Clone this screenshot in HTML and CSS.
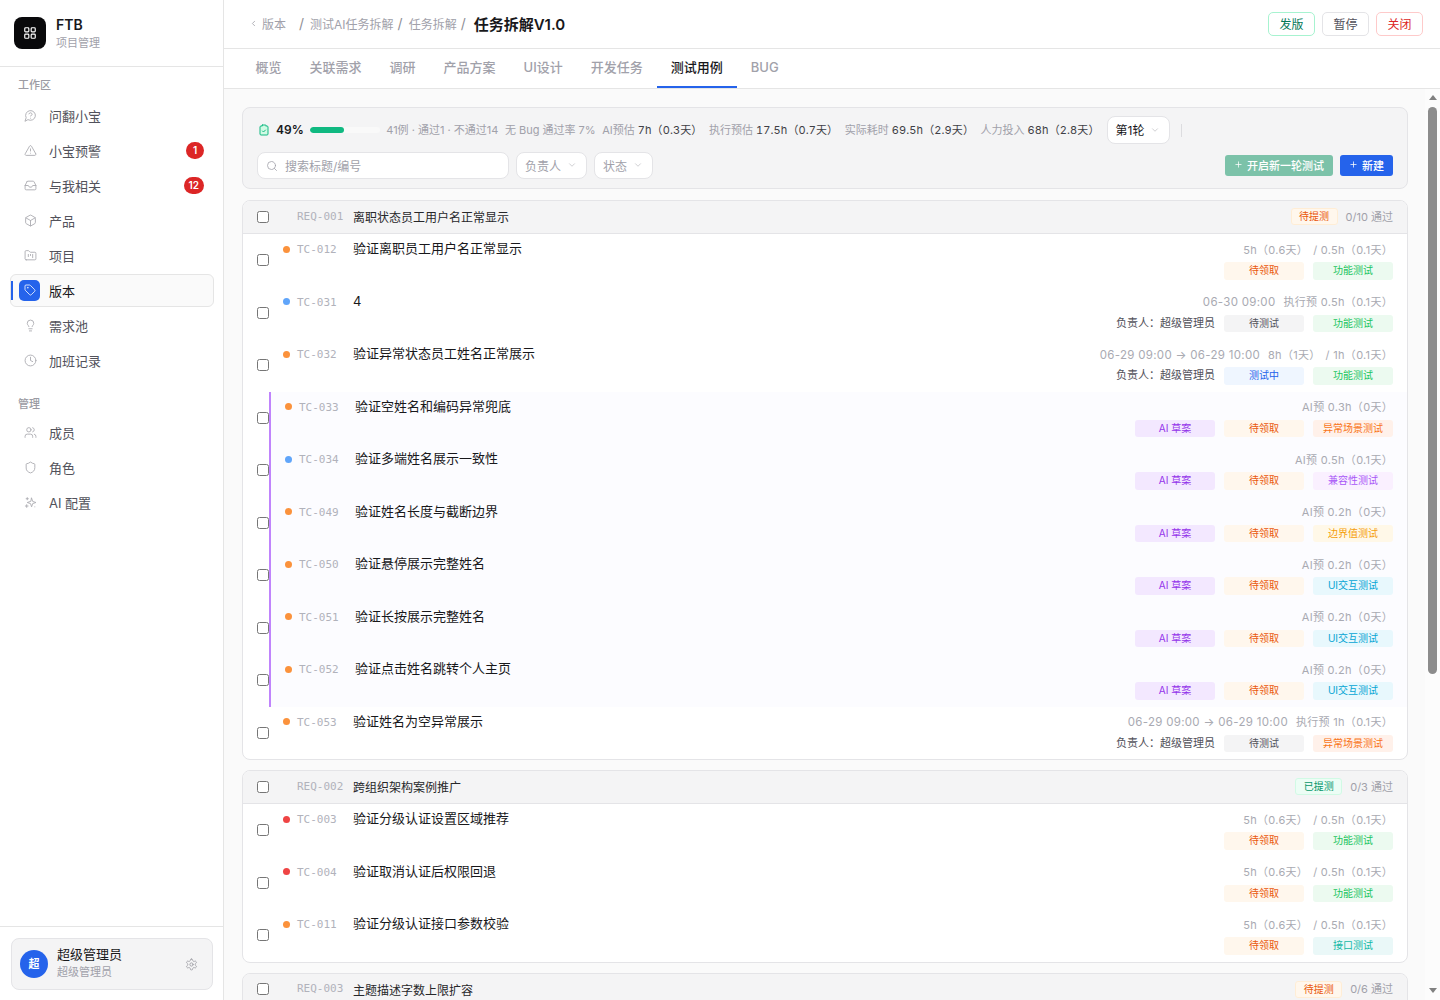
FILE: index.html
```html
<!DOCTYPE html>
<html lang="zh-CN">
  <head>
    <meta charset="UTF-8" />
    <meta name="viewport" content="width=device-width, initial-scale=1.0" />
    <title>任务拆解V1.0</title>
    <link rel="stylesheet" href="styles.css">
  </head>
  <body>
    <svg class="sprite" xmlns="http://www.w3.org/2000/svg">
      <symbol id="i-ask" viewBox="0 0 24 24"><path d="M7.9 20A9 9 0 1 0 4 16.1L2 22Z"/><path d="M9.09 9a3 3 0 0 1 5.83 1c0 2-3 3-3 3"/><path d="M12 17h.01"/></symbol>
      <symbol id="i-alert" viewBox="0 0 24 24"><path d="m21.73 18-8-14a2 2 0 0 0-3.48 0l-8 14A2 2 0 0 0 4 21h16a2 2 0 0 0 1.73-3"/><path d="M12 9v4"/><path d="M12 17h.01"/></symbol>
      <symbol id="i-inbox" viewBox="0 0 24 24"><polyline points="22 12 16 12 14 15 10 15 8 12 2 12"/><path d="M5.45 5.11 2 12v6a2 2 0 0 0 2 2h16a2 2 0 0 0 2-2v-6l-3.45-6.89A2 2 0 0 0 16.76 4H7.24a2 2 0 0 0-1.79 1.11z"/></symbol>
      <symbol id="i-package" viewBox="0 0 24 24"><path d="M21 8a2 2 0 0 0-1-1.73l-7-4a2 2 0 0 0-2 0l-7 4A2 2 0 0 0 3 8v8a2 2 0 0 0 1 1.73l7 4a2 2 0 0 0 2 0l7-4A2 2 0 0 0 21 16Z"/><path d="m3.3 7 8.7 5 8.7-5"/><path d="M12 22V12"/></symbol>
      <symbol id="i-folder" viewBox="0 0 24 24"><path d="M4 20h16a2 2 0 0 0 2-2V8a2 2 0 0 0-2-2h-7.93a2 2 0 0 1-1.66-.9l-.82-1.2A2 2 0 0 0 7.93 3H4a2 2 0 0 0-2 2v13c0 1.1.9 2 2 2Z"/><path d="M8 10v4"/><path d="M12 10v2"/><path d="M16 10v6"/></symbol>
      <symbol id="i-tag" viewBox="0 0 24 24"><path d="M12.586 2.586A2 2 0 0 0 11.172 2H4a2 2 0 0 0-2 2v7.172a2 2 0 0 0 .586 1.414l8.704 8.704a2.426 2.426 0 0 0 3.42 0l6.58-6.58a2.426 2.426 0 0 0 0-3.42z"/><circle cx="7.5" cy="7.5" r=".5"/></symbol>
      <symbol id="i-bulb" viewBox="0 0 24 24"><path d="M15 14c.2-1 .7-1.7 1.5-2.5 1-.9 1.5-2.2 1.5-3.5A6 6 0 0 0 6 8c0 1 .2 2.2 1.5 3.5.7.7 1.3 1.5 1.5 2.5"/><path d="M9 18h6"/><path d="M10 22h4"/></symbol>
      <symbol id="i-clock" viewBox="0 0 24 24"><circle cx="12" cy="12" r="10"/><polyline points="12 6 12 12 16 14"/></symbol>
      <symbol id="i-users" viewBox="0 0 24 24"><path d="M16 21v-2a4 4 0 0 0-4-4H6a4 4 0 0 0-4 4v2"/><circle cx="9" cy="7" r="4"/><path d="M22 21v-2a4 4 0 0 0-3-3.87"/><path d="M16 3.13a4 4 0 0 1 0 7.75"/></symbol>
      <symbol id="i-shield" viewBox="0 0 24 24"><path d="M20 13c0 5-3.5 7.5-7.66 8.95a1 1 0 0 1-.67-.01C7.5 20.5 4 18 4 13V6a1 1 0 0 1 1-1c2 0 4.5-1.2 6.24-2.72a1.17 1.17 0 0 1 1.52 0C14.51 3.81 17 5 19 5a1 1 0 0 1 1 1z"/></symbol>
      <symbol id="i-spark" viewBox="0 0 24 24"><path d="M14 4 16 10 22 12 16 14 14 20 12 14 6 12 12 10Z"/><path d="M6 3v4"/><path d="M4 5h4"/><path d="M5 16v5"/><path d="M2.5 18.5h5"/><path d="M20 20h.01"/></symbol>
      <symbol id="i-gear" viewBox="0 0 24 24"><path d="M12.22 2h-.44a2 2 0 0 0-2 2v.18a2 2 0 0 1-1 1.73l-.43.25a2 2 0 0 1-2 0l-.15-.08a2 2 0 0 0-2.73.73l-.22.38a2 2 0 0 0 .73 2.73l.15.1a2 2 0 0 1 1 1.72v.51a2 2 0 0 1-1 1.74l-.15.09a2 2 0 0 0-.73 2.73l.22.38a2 2 0 0 0 2.73.73l.15-.08a2 2 0 0 1 2 0l.43.25a2 2 0 0 1 1 1.73V20a2 2 0 0 0 2 2h.44a2 2 0 0 0 2-2v-.18a2 2 0 0 1 1-1.73l.43-.25a2 2 0 0 1 2 0l.15.08a2 2 0 0 0 2.73-.73l.22-.39a2 2 0 0 0-.73-2.73l-.15-.08a2 2 0 0 1-1-1.74v-.5a2 2 0 0 1 1-1.74l.15-.09a2 2 0 0 0 .73-2.73l-.22-.38a2 2 0 0 0-2.73-.73l-.15.08a2 2 0 0 1-2 0l-.43-.25a2 2 0 0 1-1-1.73V4a2 2 0 0 0-2-2z"/><circle cx="12" cy="12" r="3"/></symbol>
      <symbol id="i-grid" viewBox="0 0 24 24"><rect x="3" y="3" width="7" height="7" rx="1.5"/><rect x="14" y="3" width="7" height="7" rx="1.5"/><rect x="3" y="14" width="7" height="7" rx="1.5"/><rect x="14" y="14" width="7" height="7" rx="1.5"/></symbol>
      <symbol id="i-clip" viewBox="0 0 24 24"><rect x="8" y="2" width="8" height="4" rx="1"/><path d="M16 4h2a2 2 0 0 1 2 2v14a2 2 0 0 1-2 2H6a2 2 0 0 1-2-2V6a2 2 0 0 1 2-2h2"/><path d="m9 14 2 2 4-4"/></symbol>
      <symbol id="i-search" viewBox="0 0 24 24"><circle cx="11" cy="11" r="8"/><path d="m21 21-4.3-4.3"/></symbol>
      <symbol id="i-down" viewBox="0 0 24 24"><path d="m6 9 6 6 6-6"/></symbol>
      <symbol id="i-left" viewBox="0 0 24 24"><path d="m15 18-6-6 6-6"/></symbol>
      <symbol id="i-plus" viewBox="0 0 24 24"><path d="M5 12h14"/><path d="M12 5v14"/></symbol>
    </svg>

    <div class="app">
      <aside class="sidebar">
        <div class="brand">
          <div class="brand-logo"><svg class="icon"><use href="#i-grid"/></svg></div>
          <div class="brand-text">
            <div class="brand-name">FTB</div>
            <div class="brand-sub">项目管理</div>
          </div>
        </div>

        <nav class="nav">
          <div class="nav-label">工作区</div>
          <a class="nav-item"><svg class="icon"><use href="#i-ask"/></svg>问翻小宝</a>
          <a class="nav-item"><svg class="icon"><use href="#i-alert"/></svg>小宝预警<span class="nav-badge">1</span></a>
          <a class="nav-item"><svg class="icon"><use href="#i-inbox"/></svg>与我相关<span class="nav-badge">12</span></a>
          <a class="nav-item"><svg class="icon"><use href="#i-package"/></svg>产品</a>
          <a class="nav-item"><svg class="icon"><use href="#i-folder"/></svg>项目</a>
          <a class="nav-item active"><span class="nav-active-icon"><svg class="icon"><use href="#i-tag"/></svg></span>版本</a>
          <a class="nav-item"><svg class="icon"><use href="#i-bulb"/></svg>需求池</a>
          <a class="nav-item"><svg class="icon"><use href="#i-clock"/></svg>加班记录</a>

          <div class="nav-label nav-label-second">管理</div>
          <a class="nav-item"><svg class="icon"><use href="#i-users"/></svg>成员</a>
          <a class="nav-item"><svg class="icon"><use href="#i-shield"/></svg>角色</a>
          <a class="nav-item"><svg class="icon"><use href="#i-spark"/></svg>AI 配置</a>
        </nav>

        <div class="user-wrap">
          <div class="user-card">
            <div class="avatar">超</div>
            <div class="user-text">
              <div class="user-name">超级管理员</div>
              <div class="user-role">超级管理员</div>
            </div>
            <svg class="icon user-gear"><use href="#i-gear"/></svg>
          </div>
        </div>
      </aside>

      <div class="page">
        <header class="topbar">
          <div class="crumbs">
            <svg class="icon crumb-back"><use href="#i-left"/></svg>
            <span class="crumb crumb-first">版本</span>
            <span class="crumb-sep">/</span>
            <span class="crumb">测试AI任务拆解</span>
            <span class="crumb-sep">/</span>
            <span class="crumb">任务拆解</span>
            <span class="crumb-sep">/</span>
            <span class="crumb-now">任务拆解V1.0</span>
          </div>
          <div class="top-actions">
            <button class="top-btn green">发版</button>
            <button class="top-btn">暂停</button>
            <button class="top-btn red">关闭</button>
          </div>
        </header>

        <div class="tabs">
          <a class="tab">概览</a>
          <a class="tab">关联需求</a>
          <a class="tab">调研</a>
          <a class="tab">产品方案</a>
          <a class="tab">UI设计</a>
          <a class="tab">开发任务</a>
          <a class="tab active">测试用例</a>
          <a class="tab">BUG</a>
        </div>

        <div class="page-body">
          <main class="main">
            <section class="toolbar">
              <div class="stats">
                <svg class="icon stats-icon"><use href="#i-clip"/></svg>
                <span class="stats-pct">49%</span>
                <span class="bar"><span class="bar-fill" style="width: 49%"></span></span>
                <span class="stat">41例 · 通过1 · 不通过14</span>
                <span class="stat">无 Bug 通过率 7%</span>
                <span class="stat">AI预估 <b>7h（0.3天）</b></span>
                <span class="stat">执行预估 <b>17.5h（0.7天）</b></span>
                <span class="stat">实际耗时 <b>69.5h（2.9天）</b></span>
                <span class="stat">人力投入 <b>68h（2.8天）</b></span>
                <span class="select round">第1轮<svg class="icon"><use href="#i-down"/></svg></span>
                <span class="divider"></span>
              </div>
              <div class="filters">
                <div class="search"><svg class="icon"><use href="#i-search"/></svg>搜索标题/编号</div>
                <span class="select">负责人<svg class="icon"><use href="#i-down"/></svg></span>
                <span class="select">状态<svg class="icon"><use href="#i-down"/></svg></span>
                <div class="filter-actions">
                  <button class="act-btn act-green"><svg class="icon"><use href="#i-plus"/></svg>开启新一轮测试</button>
                  <button class="act-btn act-blue"><svg class="icon"><use href="#i-plus"/></svg>新建</button>
                </div>
              </div>
            </section>

            <section class="group">
              <div class="group-head">
                <input type="checkbox" />
                <span class="code req">REQ-001</span>
                <span class="group-title">离职状态员工用户名正常显示</span>
                <span class="state orange">待提测</span>
                <span class="pass">0/10 通过</span>
              </div>
              <div class="case">
                <input type="checkbox" />
                <div class="case-body">
                  <span class="dot orange-dot"></span><span class="code">TC-012</span><span class="case-title">验证离职员工用户名正常显示</span>
                  <div class="case-right">
                    <div class="meta"><span>5h（0.6天）</span><span class="after-paren">/ 0.5h（0.1天）</span></div>
                    <div class="tags"><span class="tag t-claim">待领取</span><span class="tag t-func">功能测试</span></div>
                  </div>
                </div>
              </div>
              <div class="case">
                <input type="checkbox" />
                <div class="case-body">
                  <span class="dot blue-dot"></span><span class="code">TC-031</span><span class="case-title">4</span>
                  <div class="case-right">
                    <div class="meta"><span class="date">06-30 09:00</span><span>执行预 0.5h（0.1天）</span></div>
                    <div class="tags"><span class="owner">负责人：超级管理员</span><span class="tag t-wait">待测试</span><span class="tag t-func">功能测试</span></div>
                  </div>
                </div>
              </div>
              <div class="case">
                <input type="checkbox" />
                <div class="case-body">
                  <span class="dot orange-dot"></span><span class="code">TC-032</span><span class="case-title">验证异常状态员工姓名正常展示</span>
                  <div class="case-right">
                    <div class="meta"><span class="date">06-29 09:00 → 06-29 10:00</span><span>8h（1天）</span><span class="after-paren">/ 1h（0.1天）</span></div>
                    <div class="tags"><span class="owner">负责人：超级管理员</span><span class="tag t-doing">测试中</span><span class="tag t-func">功能测试</span></div>
                  </div>
                </div>
              </div>
              <div class="case ai">
                <input type="checkbox" />
                <div class="case-body">
                  <span class="dot orange-dot"></span><span class="code">TC-033</span><span class="case-title">验证空姓名和编码异常兜底</span>
                  <div class="case-right">
                    <div class="meta"><span>AI预 0.3h（0天）</span></div>
                    <div class="tags"><span class="tag t-ai">AI 草案</span><span class="tag t-claim">待领取</span><span class="tag t-error">异常场景测试</span></div>
                  </div>
                </div>
              </div>
              <div class="case ai">
                <input type="checkbox" />
                <div class="case-body">
                  <span class="dot blue-dot"></span><span class="code">TC-034</span><span class="case-title">验证多端姓名展示一致性</span>
                  <div class="case-right">
                    <div class="meta"><span>AI预 0.5h（0.1天）</span></div>
                    <div class="tags"><span class="tag t-ai">AI 草案</span><span class="tag t-claim">待领取</span><span class="tag t-compat">兼容性测试</span></div>
                  </div>
                </div>
              </div>
              <div class="case ai">
                <input type="checkbox" />
                <div class="case-body">
                  <span class="dot orange-dot"></span><span class="code">TC-049</span><span class="case-title">验证姓名长度与截断边界</span>
                  <div class="case-right">
                    <div class="meta"><span>AI预 0.2h（0天）</span></div>
                    <div class="tags"><span class="tag t-ai">AI 草案</span><span class="tag t-claim">待领取</span><span class="tag t-edge">边界值测试</span></div>
                  </div>
                </div>
              </div>
              <div class="case ai">
                <input type="checkbox" />
                <div class="case-body">
                  <span class="dot orange-dot"></span><span class="code">TC-050</span><span class="case-title">验证悬停展示完整姓名</span>
                  <div class="case-right">
                    <div class="meta"><span>AI预 0.2h（0天）</span></div>
                    <div class="tags"><span class="tag t-ai">AI 草案</span><span class="tag t-claim">待领取</span><span class="tag t-ui">UI交互测试</span></div>
                  </div>
                </div>
              </div>
              <div class="case ai">
                <input type="checkbox" />
                <div class="case-body">
                  <span class="dot orange-dot"></span><span class="code">TC-051</span><span class="case-title">验证长按展示完整姓名</span>
                  <div class="case-right">
                    <div class="meta"><span>AI预 0.2h（0天）</span></div>
                    <div class="tags"><span class="tag t-ai">AI 草案</span><span class="tag t-claim">待领取</span><span class="tag t-ui">UI交互测试</span></div>
                  </div>
                </div>
              </div>
              <div class="case ai">
                <input type="checkbox" />
                <div class="case-body">
                  <span class="dot orange-dot"></span><span class="code">TC-052</span><span class="case-title">验证点击姓名跳转个人主页</span>
                  <div class="case-right">
                    <div class="meta"><span>AI预 0.2h（0天）</span></div>
                    <div class="tags"><span class="tag t-ai">AI 草案</span><span class="tag t-claim">待领取</span><span class="tag t-ui">UI交互测试</span></div>
                  </div>
                </div>
              </div>
              <div class="case">
                <input type="checkbox" />
                <div class="case-body">
                  <span class="dot orange-dot"></span><span class="code">TC-053</span><span class="case-title">验证姓名为空异常展示</span>
                  <div class="case-right">
                    <div class="meta"><span class="date">06-29 09:00 → 06-29 10:00</span><span>执行预 1h（0.1天）</span></div>
                    <div class="tags"><span class="owner">负责人：超级管理员</span><span class="tag t-wait">待测试</span><span class="tag t-error">异常场景测试</span></div>
                  </div>
                </div>
              </div>
            </section>

            <section class="group">
              <div class="group-head">
                <input type="checkbox" />
                <span class="code req">REQ-002</span>
                <span class="group-title">跨组织架构案例推广</span>
                <span class="state green">已提测</span>
                <span class="pass">0/3 通过</span>
              </div>
              <div class="case">
                <input type="checkbox" />
                <div class="case-body">
                  <span class="dot red-dot"></span><span class="code">TC-003</span><span class="case-title">验证分级认证设置区域推荐</span>
                  <div class="case-right">
                    <div class="meta"><span>5h（0.6天）</span><span class="after-paren">/ 0.5h（0.1天）</span></div>
                    <div class="tags"><span class="tag t-claim">待领取</span><span class="tag t-func">功能测试</span></div>
                  </div>
                </div>
              </div>
              <div class="case">
                <input type="checkbox" />
                <div class="case-body">
                  <span class="dot red-dot"></span><span class="code">TC-004</span><span class="case-title">验证取消认证后权限回退</span>
                  <div class="case-right">
                    <div class="meta"><span>5h（0.6天）</span><span class="after-paren">/ 0.5h（0.1天）</span></div>
                    <div class="tags"><span class="tag t-claim">待领取</span><span class="tag t-func">功能测试</span></div>
                  </div>
                </div>
              </div>
              <div class="case">
                <input type="checkbox" />
                <div class="case-body">
                  <span class="dot orange-dot"></span><span class="code">TC-011</span><span class="case-title">验证分级认证接口参数校验</span>
                  <div class="case-right">
                    <div class="meta"><span>5h（0.6天）</span><span class="after-paren">/ 0.5h（0.1天）</span></div>
                    <div class="tags"><span class="tag t-claim">待领取</span><span class="tag t-api">接口测试</span></div>
                  </div>
                </div>
              </div>
            </section>

            <section class="group">
              <div class="group-head">
                <input type="checkbox" />
                <span class="code req">REQ-003</span>
                <span class="group-title">主题描述字数上限扩容</span>
                <span class="state orange">待提测</span>
                <span class="pass">0/6 通过</span>
              </div>
            </section>
          </main>

          <div class="scrollbar">
            <span class="sb-up"></span>
            <span class="sb-thumb"></span>
            <span class="sb-down"></span>
          </div>
        </div>
      </div>
    </div>
  </body>
</html>
```

FILE: styles.css
```css
* {
  margin: 0;
  padding: 0;
  box-sizing: border-box;
}

html,
body {
  height: 100%;
  overflow: hidden;
}

body {
  font-family: Inter, "Noto Sans CJK SC", sans-serif;
  font-size: 12px;
  color: #18181b;
  background-color: #fff;
}

.sprite {
  display: none;
}

.icon {
  width: 13px;
  height: 13px;
  fill: none;
  stroke: currentColor;
  stroke-width: 2;
  stroke-linecap: round;
  stroke-linejoin: round;
  flex-shrink: 0;
}

.app {
  display: flex;
  height: 100%;
}

/* 侧边栏 */
.sidebar {
  width: 224px;
  flex-shrink: 0;
  display: flex;
  flex-direction: column;
  border-right: 1px solid #e5e5e5;
}

.brand {
  height: 67px;
  padding: 17px 14px 0;
  display: flex;
  gap: 10px;
  border-bottom: 1px solid #e5e5e5;
}

.brand-logo {
  width: 32px;
  height: 32px;
  background-color: #09090b;
  color: #fff;
  border-radius: 8px;
  display: flex;
  align-items: center;
  justify-content: center;
}

.brand-logo .icon {
  width: 14px;
  height: 14px;
}

.brand-text {
  margin-top: -1px;
}

.brand-name {
  font-size: 14px;
  font-weight: 600;
  line-height: 17px;
}

.brand-sub {
  font-size: 11px;
  line-height: 16px;
  margin-top: 2px;
  color: #a1a1aa;
}

.nav {
  flex: 1;
  padding: 10px 9px 0 10px;
}

.nav-label {
  font-size: 11px;
  font-weight: 500;
  line-height: 16px;
  color: #9b9ba3;
  padding-left: 8px;
  margin-bottom: 5.5px;
}

.nav-label-second {
  margin-top: 19px;
  margin-bottom: 4px;
}

.nav-item {
  position: relative;
  height: 33px;
  margin-bottom: 2px;
  padding: 0 9px 0 9px;
  display: flex;
  align-items: center;
  font-size: 13px;
  color: #52525b;
  border: 1px solid transparent;
  border-radius: 6px;
}

.nav-item > .icon {
  width: 13px;
  height: 13px;
  margin: 0 12px 0 4px;
  color: #adadb3;
  stroke-width: 1.7;
}

.nav-badge {
  margin-left: auto;
  margin-top: 1px;
  min-width: 18px;
  height: 17px;
  padding: 0 5px;
  border-radius: 9px;
  background-color: #dc2626;
  color: #fff;
  font-size: 10px;
  font-weight: 600;
  line-height: 17px;
  text-align: center;
}

.nav-item.active {
  background-color: #fafafa;
  border-color: #e5e5e5;
  color: #18181b;
}

.nav-item.active::before {
  content: "";
  position: absolute;
  left: 0;
  top: 6px;
  bottom: 6px;
  width: 2px;
  background-color: #2563eb;
}

.nav-active-icon {
  width: 21px;
  height: 21px;
  margin-right: 9px;
  margin-left: -1px;
  border-radius: 5px;
  background-color: #2563eb;
  color: #fff;
  display: flex;
  align-items: center;
  justify-content: center;
}

.nav-active-icon .icon {
  width: 12px;
  height: 12px;
  stroke-width: 1.6;
}

.user-wrap {
  border-top: 1px solid #e5e5e5;
  padding: 11px 10px 10px 11px;
}

.user-card {
  height: 52px;
  padding: 0 14px 0 8px;
  display: flex;
  align-items: center;
  background-color: #f4f4f5;
  border: 1px solid #e4e4e7;
  border-radius: 8px;
}

.avatar {
  width: 28px;
  height: 28px;
  border-radius: 50%;
  background-color: #2563eb;
  color: #fff;
  font-size: 11px;
  font-weight: 700;
  line-height: 28px;
  text-align: center;
  margin-right: 9px;
}

.user-text {
  flex: 1;
  margin-top: -2px;
}

.user-name {
  font-size: 13px;
  line-height: 17px;
}

.user-role {
  font-size: 11px;
  line-height: 16px;
  margin-top: 1px;
  color: #a1a1aa;
}

.user-gear {
  color: #a5a5ab;
  stroke-width: 1.8;
}

/* 主体 */
.page {
  flex: 1;
  min-width: 0;
  display: flex;
  flex-direction: column;
}

.topbar {
  height: 49px;
  flex-shrink: 0;
  padding: 0 17px 0 25px;
  display: flex;
  align-items: center;
  justify-content: space-between;
  border-bottom: 1px solid #e5e5e5;
}

.crumbs {
  display: flex;
  align-items: center;
  margin-bottom: 2px;
  color: #a1a1aa;
}

.crumb-back {
  width: 9px;
  height: 9px;
  margin-right: 4px;
  color: #9b9ba3;
}

.crumb-sep {
  font-size: 14px;
  margin: 0 6px 0 4px;
  color: #8f8f96;
}

.crumb-first {
  margin-right: 5px;
}

.crumb-first + .crumb-sep {
  margin-right: 6px;
  margin-left: 8px;
}

.crumb-now {
  font-size: 15px;
  font-weight: 600;
  color: #18181b;
  margin-left: 2px;
}

.top-actions {
  display: flex;
  gap: 7px;
}

.top-btn {
  width: 47px;
  height: 24px;
  padding-bottom: 2px;
  font-family: inherit;
  font-size: 12px;
  color: #52525b;
  background-color: #fff;
  border: 1px solid #e4e4e7;
  border-radius: 5px;
}

.top-btn.green {
  color: #047857;
  border-color: #a7f3d0;
}

.top-btn.red {
  color: #dc2626;
  border-color: #fecaca;
}

.tabs {
  height: 40px;
  flex-shrink: 0;
  padding: 0 17.5px;
  display: flex;
  border-bottom: 1px solid #e5e5e5;
}

.tab {
  height: 39px;
  padding: 0 14px;
  font-size: 13px;
  font-weight: 500;
  line-height: 37px;
  color: #a1a1aa;
  border-bottom: 2px solid transparent;
}

.tab.active {
  color: #18181b;
  border-bottom-color: #2563eb;
}

.page-body {
  flex: 1;
  min-height: 0;
  display: flex;
}

.main {
  flex: 1;
  min-width: 0;
  overflow: hidden;
  padding: 18px 17px 0 18px;
  background-color: #fafafa;
}

/* 滚动条 */
.scrollbar {
  width: 15px;
  flex-shrink: 0;
  display: flex;
  flex-direction: column;
  align-items: center;
  background-color: #fcfcfc;
}

.sb-up {
  margin-top: 6px;
  border-left: 4.5px solid transparent;
  border-right: 4.5px solid transparent;
  border-bottom: 5px solid #808080;
}

.sb-thumb {
  width: 9px;
  height: 567px;
  margin-top: 7px;
  border-radius: 5px;
  background-color: #8c8c8c;
}

.sb-down {
  margin-top: auto;
  margin-bottom: 7px;
  border-left: 4.5px solid transparent;
  border-right: 4.5px solid transparent;
  border-top: 5px solid #808080;
}

/* 工具栏 */
.toolbar {
  height: 82px;
  margin-bottom: 11px;
  padding: 8px 14px 0;
  background-color: #f4f4f5;
  border: 1px solid #e4e4e7;
  border-radius: 8px;
}

.stats {
  height: 28px;
  display: flex;
  align-items: center;
  font-size: 11px;
  white-space: nowrap;
}

.stats-icon {
  width: 12px;
  height: 12px;
  margin-left: 1px;
  color: #10b981;
  fill: #d1fae5;
}

.stats-pct {
  margin-left: 6px;
  margin-bottom: 2px;
  font-size: 12px;
  font-weight: 600;
}

.bar {
  width: 70px;
  height: 6px;
  margin-left: 6px;
  border-radius: 3px;
  background-color: #f9f9f9;
  overflow: hidden;
}

.bar-fill {
  display: block;
  height: 100%;
  border-radius: 3px;
  background-color: #10b981;
}

.stat {
  color: #a1a1aa;
  margin-left: 6.5px;
  margin-bottom: 2px;
}

.stat b {
  font-size: 11px;
  font-weight: 400;
  font-variant-numeric: tabular-nums;
  letter-spacing: 0.1px;
  color: #3f3f46;
}

.select {
  height: 28px;
  padding: 0 9px 1px 8px;
  display: inline-flex;
  align-items: center;
  gap: 6px;
  font-size: 12px;
  color: #a1a1aa;
  background-color: #fff;
  border: 1px solid #e4e4e7;
  border-radius: 8px;
}

.select .icon {
  width: 10px;
  height: 10px;
  color: #b8b8bd;
  stroke-width: 1.6;
}

.stats .round {
  margin-left: 7px;
  color: #18181b;
}

.divider {
  width: 1px;
  height: 13px;
  margin-left: 11px;
  background-color: #dcdcdf;
}

.filters {
  margin-top: 8px;
  display: flex;
  align-items: center;
  gap: 7px;
}

.search {
  width: 252px;
  height: 27px;
  padding: 0 8px;
  display: flex;
  align-items: center;
  gap: 7px;
  color: #a1a1aa;
  background-color: #fff;
  border: 1px solid #e4e4e7;
  border-radius: 8px;
}

.search .icon {
  width: 12px;
  height: 12px;
  stroke-width: 1.6;
}

.filters .select {
  height: 27px;
}

.filter-actions {
  margin-left: auto;
  display: flex;
  gap: 7px;
}

.act-btn {
  height: 21px;
  padding: 0 9px 2px;
  display: flex;
  align-items: center;
  gap: 4px;
  font-family: inherit;
  font-size: 11px;
  font-weight: 500;
  color: #fff;
  border: none;
  border-radius: 3px;
}

.act-btn .icon {
  width: 9px;
  height: 9px;
}

.act-green {
  background-color: #7cc2a9;
}

.act-blue {
  background-color: #2563eb;
}

/* 分组 */
.group {
  margin-bottom: 10px;
  background-color: #fff;
  border: 1px solid #e4e4e7;
  border-radius: 8px;
  overflow: hidden;
}

.group-head {
  height: 33px;
  padding: 0 14px 1px;
  display: flex;
  align-items: center;
  background-color: #f4f4f5;
  border-bottom: 1px solid #e4e4e7;
}

input[type="checkbox"] {
  width: 12px;
  height: 12px;
  margin: 0;
  flex-shrink: 0;
}

.code {
  width: 56px;
  flex-shrink: 0;
  font-family: "DejaVu Sans Mono", monospace;
  font-size: 11px;
  line-height: 18px;
  color: #b1b2bb;
}

.req {
  margin-left: 28px;
}

.group-title {
  flex: 1;
  font-size: 12px;
  color: #27272a;
}

.state {
  width: 47px;
  height: 17px;
  font-size: 10px;
  line-height: 15px;
  text-align: center;
  border: 1px solid;
  border-radius: 3px;
}

.state.orange {
  color: #ea580c;
  background-color: #fff7ed;
  border-color: #ffedd5;
}

.state.green {
  color: #059669;
  background-color: #ecfdf5;
  border-color: #d1fae5;
}

.pass {
  margin-left: 8px;
  margin-bottom: 2px;
  text-align: right;
  font-size: 11px;
  color: #a1a1aa;
}

.case {
  display: flex;
  align-items: center;
  padding-left: 14px;
}

.case-body {
  flex: 1;
  min-width: 0;
  height: 52.5px;
  padding: 6px 14px 0;
  display: flex;
  align-items: flex-start;
}

.case.ai .case-body {
  border-left: 2px solid #c084fc;
  background-color: #fcfcff;
}

.dot {
  width: 7px;
  height: 7px;
  margin: 5.5px 7px 0 0;
  flex-shrink: 0;
  border-radius: 50%;
}

.orange-dot {
  background-color: #fb923c;
}

.blue-dot {
  background-color: #60a5fa;
}

.red-dot {
  background-color: #ef4444;
}

.case-body .code {
  margin-top: 1px;
}

.case-title {
  margin-top: -1px;
  font-size: 13px;
  line-height: 18px;
  color: #18181b;
}

.case-right {
  margin-left: auto;
  display: flex;
  flex-direction: column;
  align-items: flex-end;
}

.meta {
  height: 18px;
  margin-top: 0.5px;
  display: flex;
  gap: 8px;
  font-size: 11px;
  letter-spacing: 0.3px;
  line-height: 18px;
  color: #a9aab2;
}

.date {
  font-size: 11.5px;
}

.after-paren {
  margin-left: -3px;
}

.tags {
  margin-top: 3.5px;
  display: flex;
  align-items: center;
  gap: 9px;
}

.owner {
  font-size: 11px;
  line-height: 17px;
  color: #52525b;
}

.tag {
  width: 80px;
  height: 17.5px;
  font-size: 10px;
  line-height: 17px;
  text-align: center;
  border-radius: 3px;
}

.t-claim {
  color: #ea580c;
  background-color: #fff7ed;
}

.t-func {
  color: #22c55e;
  background-color: #ecfaf0;
}

.t-wait {
  color: #52525b;
  background-color: #f4f4f5;
}

.t-doing {
  color: #2563eb;
  background-color: #eff6ff;
}

.t-ai {
  color: #9333ea;
  background-color: #f3e8ff;
}

.t-error {
  color: #f97316;
  background-color: #fff1ea;
}

.t-compat {
  color: #a855f7;
  background-color: #faf0ff;
}

.t-edge {
  color: #f59e0b;
  background-color: #fff8e8;
}

.t-ui {
  color: #06a5d4;
  background-color: #e8f8fd;
}

.t-api {
  color: #14b8a6;
  background-color: #eaf8f8;
}
```
